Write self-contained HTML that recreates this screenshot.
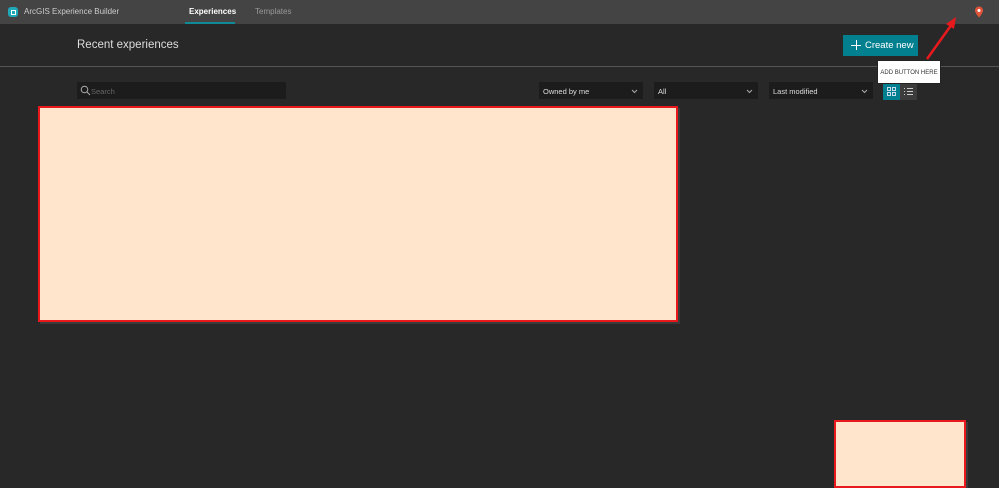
<!DOCTYPE html>
<html><head><style>
*{margin:0;padding:0;box-sizing:border-box}
body{width:999px;height:488px;background:#282828;font-family:"Liberation Sans",sans-serif;position:relative;overflow:hidden;color:#ddd}
.a{position:absolute}
.hdr{left:0;top:0;width:999px;height:24px;background:#444}
.sel{background:#1c1c1c;height:17px;font-size:7.5px;color:#ddd;padding:5px 4px 0}
.sel svg{position:absolute;right:5px;top:7px}
.pink{background:#ffe5cc;border:2px solid #e8191c;box-shadow:2px 2px 0 #3a3a3a}
</style></head><body>
<div class="a hdr"></div>
<div class="a" style="left:8px;top:7px;width:10px;height:10px;border-radius:3px;background:#1fa9b8"></div>
<div class="a" style="left:10.5px;top:9.5px;width:5px;height:5px;border:1px solid #fff"></div>
<div class="a" style="left:24px;top:7px;font-size:8px;color:#ccc">ArcGIS Experience Builder</div>
<div class="a" style="left:189px;top:7px;font-size:8px;color:#fff;font-weight:bold">Experiences</div>
<div class="a" style="left:185px;top:22px;width:50px;height:2px;background:#0e8a96"></div>
<div class="a" style="left:255px;top:7px;font-size:8px;color:#999">Templates</div>
<svg class="a" style="left:974px;top:6px" width="10" height="12" viewBox="0 0 10 12"><path d="M5 11.5C5 11.5 1 7 1 4.5a4 4 0 0 1 8 0C9 7 5 11.5 5 11.5z" fill="#e0553a"/><circle cx="5" cy="4.5" r="1.5" fill="#fff"/></svg>
<div class="a" style="left:77px;top:39px;font-size:11.5px;color:#ddd">Recent experiences</div>
<div class="a" style="left:843px;top:35px;width:75px;height:21px;background:#02808f;color:#fff;font-size:9.5px;padding:5px 0 0 22px">Create new</div>
<div class="a" style="left:851px;top:45px;width:10px;height:1px;background:#fff"></div>
<div class="a" style="left:856px;top:40px;width:1px;height:10px;background:#fff"></div>
<div class="a" style="left:0;top:66px;width:999px;height:1px;background:#555"></div>
<div class="a sel" style="left:77px;top:82px;width:209px;padding-left:14px;color:#666">Search</div>
<svg class="a" style="left:80px;top:85px" width="11" height="11" viewBox="0 0 11 11"><circle cx="4.5" cy="4.5" r="3.3" fill="none" stroke="#aaa"/><path d="M7 7L10 10" stroke="#aaa"/></svg>
<div class="a sel" style="left:539px;top:82px;width:104px">Owned by me<svg width="7" height="5"><path d="M1 1l2.5 2.5L6 1" fill="none" stroke="#aaa"/></svg></div>
<div class="a sel" style="left:654px;top:82px;width:104px">All<svg width="7" height="5"><path d="M1 1l2.5 2.5L6 1" fill="none" stroke="#aaa"/></svg></div>
<div class="a sel" style="left:769px;top:82px;width:104px">Last modified<svg width="7" height="5"><path d="M1 1l2.5 2.5L6 1" fill="none" stroke="#aaa"/></svg></div>
<div class="a" style="left:883px;top:83px;width:17px;height:17px;background:#02808f"></div>
<svg class="a" style="left:887px;top:87px" width="9" height="9"><rect x=".5" y=".5" width="3" height="3" fill="none" stroke="#cde"/><rect x="5.5" y=".5" width="3" height="3" fill="none" stroke="#cde"/><rect x=".5" y="5.5" width="3" height="3" fill="none" stroke="#cde"/><rect x="5.5" y="5.5" width="3" height="3" fill="none" stroke="#cde"/></svg>
<div class="a" style="left:900px;top:83px;width:17px;height:17px;background:#3c3c3c"></div>
<svg class="a" style="left:904px;top:87px" width="9" height="9"><path d="M0 1.5h1M3 1.5h6M0 4.5h1M3 4.5h6M0 7.5h1M3 7.5h6" stroke="#ccc"/></svg>
<div class="a" style="left:877px;top:60px;width:64px;height:24px;background:#fff;border:1px solid #222;font-size:6px;color:#333;padding-top:9px;text-align:center">ADD BUTTON HERE</div>
<svg class="a" style="left:920px;top:12px" width="45" height="52"><path d="M7 47L32 12" stroke="#e8191c" stroke-width="2.5"/><path d="M36 5L26 12L34 17z" fill="#e8191c"/></svg>
<div class="a pink" style="left:38px;top:106px;width:640px;height:216px"></div>
<div class="a pink" style="left:834px;top:420px;width:132px;height:68px"></div>
</body></html>
